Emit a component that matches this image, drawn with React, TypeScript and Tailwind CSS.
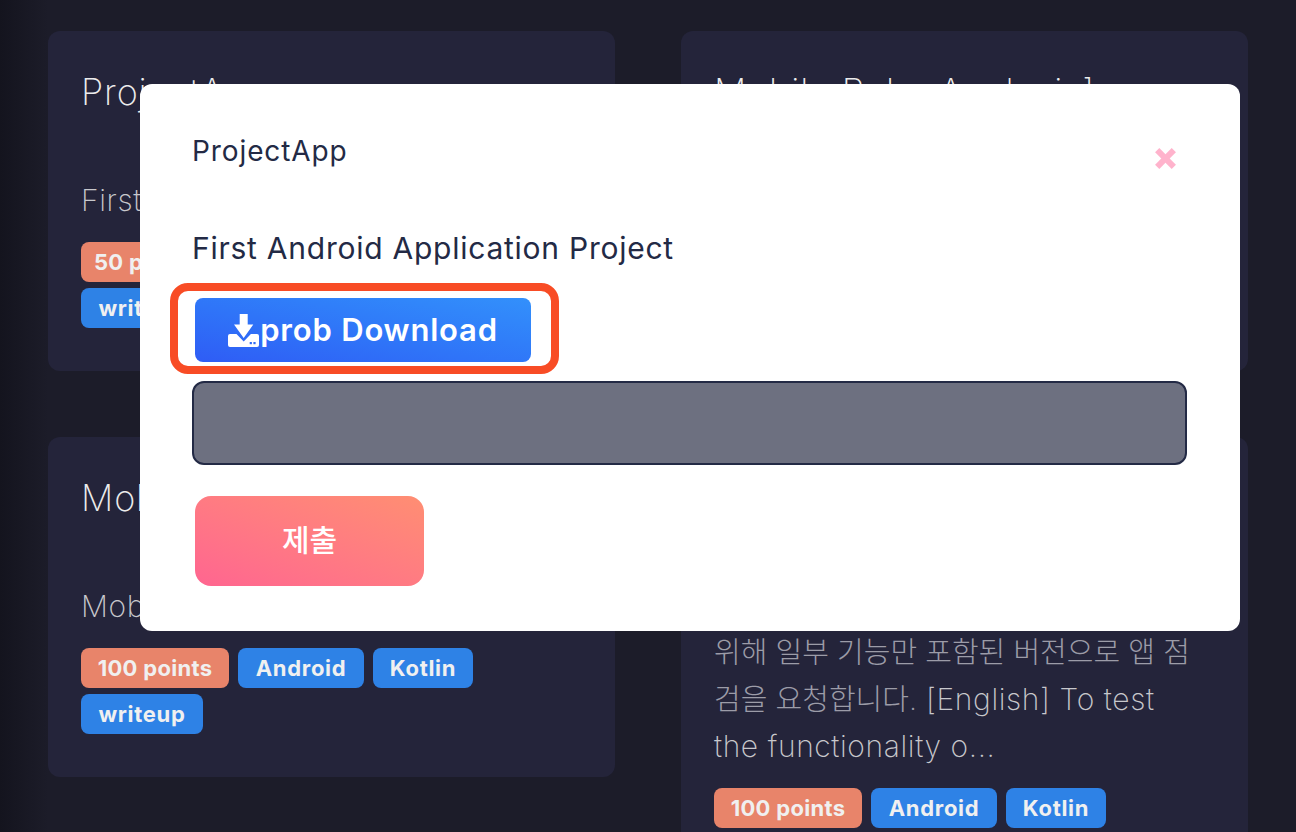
const F = { fontFamily: "Inter, 'Noto Sans CJK KR', sans-serif" };

const W: Record<string, string> = {
  "50 points": "w-[130px]",
  "100 points": "w-[148px]",
  Android: "w-[126px]",
  Kotlin: "w-[100px]",
  writeup: "w-[122px]",
};

function Tag({ label, orange }: { label: string; orange?: boolean }) {
  return (
    <span
      className={`rounded-lg h-10 flex items-center justify-center text-[22px] font-bold text-[#f0f0f0] ${W[label]} ${
        orange ? "bg-[#e8846a] tracking-[0.3px]" : "bg-[#2e82e6] tracking-[0.7px]"
      }`}
    >
      {label}
    </span>
  );
}

function Tags({ items }: { items: string[] }) {
  return (
    <div className="mt-[19px] flex flex-wrap gap-x-[9px] gap-y-1.5">
      {items.map((t, i) => (
        <Tag key={t} label={t} orange={i === 0} />
      ))}
    </div>
  );
}

function Title({ children }: { children: React.ReactNode }) {
  return (
    <h2 className="text-[36px] leading-[54px] font-extralight text-[#ececec] whitespace-nowrap tracking-[0.85px]">
      {children}
    </h2>
  );
}

function Desc({ children }: { children: React.ReactNode }) {
  return (
    <p className="mt-[58px] text-[30px] leading-[46px] font-extralight text-[#c8c8cc] tracking-[0.6px] whitespace-nowrap">
      {children}
    </p>
  );
}

function Card({ title, desc, tags }: { title: string; desc: string; tags: string[] }) {
  return (
    <div className="bg-[#24243a] rounded-xl px-[33px] pt-[34px] h-[340px]">
      <Title>{title}</Title>
      <Desc>{desc}</Desc>
      <Tags items={tags} />
    </div>
  );
}

function DownloadIcon() {
  return (
    <svg width="32" height="33" viewBox="0 0 32 33" fill="white" className="shrink-0">
      <path d="M11.7 0h8v10.5h5.6L15.7 24 6 10.5h5.7z" />
      <path d="M2 20h6.5l7.2 7.5 7.2-7.5H29a2 2 0 0 1 2 2v9a2 2 0 0 1-2 2H2a2 2 0 0 1-2-2v-9a2 2 0 0 1 2-2z" />
      <rect x="21.7" y="28" width="2.2" height="2.2" fill="#2f6cf6" />
      <rect x="25.4" y="28" width="2.2" height="2.2" fill="#2f6cf6" />
    </svg>
  );
}

function CloseIcon() {
  return (
    <svg width="21" height="21" viewBox="0 0 21 21" className="text-[#ffb3cc]" stroke="currentColor" strokeWidth="6">
      <line x1="2.2" y1="2.2" x2="18.8" y2="18.8" />
      <line x1="18.8" y1="2.2" x2="2.2" y2="18.8" />
    </svg>
  );
}

export default function App() {
  return (
    <div
      className="relative h-[832px] w-[1296px] overflow-hidden bg-[linear-gradient(to_right,#14141e,#1c1c29_48px)]"
      style={F}
    >
      <div className="grid grid-cols-[567px_567px] gap-x-[66px] gap-y-[66px] pl-12 pt-[31px] items-start">
        <Card title="ProjectApp" desc="First Android Application Project" tags={["50 points", "Android", "Kotlin", "writeup"]} />
        <Card title="Mobile Baby Analysis]" desc="Mobile Baby Analysis" tags={["100 points", "Android", "Kotlin", "writeup"]} />
        <Card title="Mobile Analysis" desc="Mobile Analysis Project" tags={["100 points", "Android", "Kotlin", "writeup"]} />
        <div className="bg-[#24243a] rounded-xl px-[33px] pt-[34px] h-[480px]">
          <Title>Mobile Baby Analysis</Title>
          <Desc>
            &nbsp;
            <br />
            <span className="text-[29px] text-[#9c9ca8] tracking-normal">위해 일부 기능만 포함된 버전으로 앱 점</span>
            <br />
            <span className="text-[29px] text-[#9c9ca8] tracking-normal">검을 요청합니다.</span> [English] To test
            <br />
            the functionality o...
          </Desc>
          <Tags items={["100 points", "Android", "Kotlin"]} />
        </div>
      </div>

      <div className="absolute left-[140px] top-[84px] w-[1100px] h-[547px] bg-white rounded-xl pl-[52px] pr-[53px] pt-[46px]">
        <div className="flex justify-between items-start">
          <h1 className="text-[28px] leading-[42px] font-normal text-[#232a45] tracking-[0.9px]">ProjectApp</h1>
          <div className="mt-[18px] mr-[11px]">
            <CloseIcon />
          </div>
        </div>
        <p className="mt-[54px] text-[30px] leading-[45px] font-normal text-[#232a45] tracking-[0.75px]">
          First Android Application Project
        </p>
        <div className="relative mt-[27px] w-fit ml-[3px]">
          <div className="absolute -left-[25px] -top-[15px] w-[389px] h-[91px] border-[8px] border-[#f84c25] rounded-[18px]" />
          <button className="relative w-[336px] h-16 rounded-lg bg-gradient-to-tr from-[#2f5cf5] to-[#3390fb] flex items-center justify-center text-white text-[31px] font-semibold tracking-[0.8px]">
            <DownloadIcon />
            prob Download
          </button>
        </div>
        <div className="mt-[19px] h-[84px] rounded-xl bg-[#6d7080] border-2 border-[#232a45]" />
        <button className="mt-[31px] ml-[3px] w-[229px] h-[90px] pb-[2px] rounded-2xl bg-gradient-to-tr from-[#ff6590] to-[#ff8e72] text-white text-[30px] font-medium block">
          제출
        </button>
      </div>
    </div>
  );
}
